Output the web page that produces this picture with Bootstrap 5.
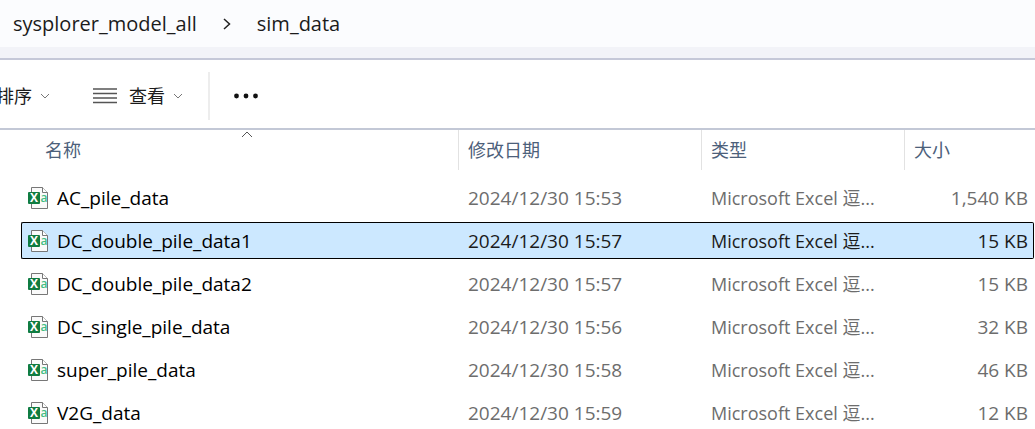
<!DOCTYPE html>
<html lang="zh-CN">
<head>
<meta charset="utf-8">
<meta name="viewport" content="width=device-width, initial-scale=1">
<title>sim_data</title>
<link href="https://cdn.jsdelivr.net/npm/bootstrap@5.3.0/dist/css/bootstrap.min.css" rel="stylesheet">
<style>
body{font:19px/24px "Open Sans","Noto Sans CJK SC",sans-serif;color:#1b1b1b;background:#fff;overflow-x:hidden}
.path-bar{height:47px;background:#fbfcfe;padding-left:13px;font-size:20px}
.path-bar a{color:#1b1b1b}
.path-sep{width:60px}
.path-gap{height:13px;background:#f2f3f8;border-bottom:2px solid #c5c8d8}
.tools{height:70px;padding-top:4px;border-bottom:2px solid #c3c8d6}
.tool{font-size:18px;line-height:24px;color:#1b1b1b;border:0;border-radius:0}
.tool-sort{margin-left:-4px}
.tool-view{margin-left:43px}
.tool-rule{width:2px;height:48px;background:#ededed;margin:0 24px 0 25px}
.files{padding:0 1px 0 21px}
.file-table{table-layout:fixed;border-collapse:separate;border-spacing:0 6px;margin:-6px 0 0}
.file-table th{height:43px;padding:0 0 3px 10px;font-size:18px;font-weight:400;color:#4c607a;background:linear-gradient(#e2e2e2,#e2e2e2) 0 0/1px 40px no-repeat}
.file-table th:first-child{padding-left:24px;background:none}
.file-table td{height:37px;padding:0 5px 0 10px;color:#6d6d6d;border:1px solid transparent;border-width:1px 0;overflow:hidden;white-space:nowrap}
.file-table td:first-child{padding-left:6px;color:#000;border-left-width:1px;border-radius:2px 0 0 2px}
.file-table td:nth-child(3){font-size:18px}
.file-table td:last-child{border-right-width:1px;border-radius:0 2px 2px 0}
.file-table .picked td{background:#cce8ff;border-color:#000;color:#1b1b1b}
.file-table .picked td:first-child{color:#000}
.col-date{width:243px}.col-type{width:203px}.col-size{width:130px}
.sort-mark{left:50%;top:1px}
.file-name{gap:9px}
</style>
</head>
<body>
<svg class="d-none" aria-hidden="true">
  <symbol id="csv" viewBox="0 0 20 22">
    <path d="M3.5.5h11l5 5v16h-16z" fill="#fafafa" stroke="#777"/>
    <path d="M14.5.5v5h5" fill="#fff" stroke="#777"/>
    <text x="12.5" y="15" font-family="Open Sans,sans-serif" font-size="12" font-weight="600" fill="#43bd83">a</text>
    <rect y="5" width="12" height="12" rx="1" fill="#107c41"/>
    <text x="6" y="15" text-anchor="middle" font-family="Open Sans,sans-serif" font-size="12" font-weight="700" fill="#fff">X</text>
  </symbol>
  <symbol id="down" viewBox="0 0 10 6"><path d="M1 1l4 4 4-4" fill="none" stroke="#777"/></symbol>
</svg>
<nav class="path-bar d-flex align-items-center" aria-label="路径">
  <a class="text-decoration-none" href="#">sysplorer_model_all</a>
  <span class="path-sep d-flex justify-content-center"><svg width="8" height="12" viewBox="0 0 8 12"><path d="M1 1l5.5 5L1 11" fill="none" stroke="#222" stroke-width="1.5"/></svg></span>
  <a class="text-decoration-none" href="#" aria-current="page">sim_data</a>
</nav>
<div class="path-gap"></div>
<div class="tools d-flex align-items-center" role="toolbar">
  <button class="tool tool-sort btn p-0 d-flex align-items-center" type="button">排序<svg class="ms-2" width="10" height="6"><use href="#down"/></svg></button>
  <button class="tool tool-view btn p-0 d-flex align-items-center" type="button"><svg width="24" height="16" viewBox="0 0 24 16"><path d="M0 1h24M0 5.5h24M0 10h24M0 14.5h24" stroke="#555" stroke-width="1.3"/></svg><span class="ms-2 ps-1">查看</span><svg class="ms-2" width="10" height="6"><use href="#down"/></svg></button>
  <span class="tool-rule"></span>
  <button class="tool btn p-0 d-flex" type="button" aria-label="更多"><svg width="24" height="6" viewBox="0 0 24 6"><g fill="#111"><circle cx="2.5" cy="3" r="2.4"/><circle cx="12" cy="3" r="2.4"/><circle cx="21.5" cy="3" r="2.4"/></g></svg></button>
</div>
<main class="files">
<table class="file-table w-100">
  <colgroup><col><col class="col-date"><col class="col-type"><col class="col-size"></colgroup>
  <thead><tr><th class="position-relative" scope="col" aria-sort="ascending">名称<svg class="sort-mark position-absolute" width="14" height="7" viewBox="0 0 14 7"><path d="M2 6l5-5 5 5" fill="none" stroke="#555"/></svg></th><th scope="col">修改日期</th><th scope="col">类型</th><th scope="col">大小</th></tr></thead>
  <tbody>
  <tr><td><div class="file-name d-flex align-items-center"><svg width="20" height="22"><use href="#csv"/></svg>AC_pile_data</div></td><td>2024/12/30 15:53</td><td>Microsoft Excel 逗...</td><td class="text-end">1,540 KB</td></tr>
  <tr class="picked" aria-selected="true"><td><div class="file-name d-flex align-items-center"><svg width="20" height="22"><use href="#csv"/></svg>DC_double_pile_data1</div></td><td>2024/12/30 15:57</td><td>Microsoft Excel 逗...</td><td class="text-end">15 KB</td></tr>
  <tr><td><div class="file-name d-flex align-items-center"><svg width="20" height="22"><use href="#csv"/></svg>DC_double_pile_data2</div></td><td>2024/12/30 15:57</td><td>Microsoft Excel 逗...</td><td class="text-end">15 KB</td></tr>
  <tr><td><div class="file-name d-flex align-items-center"><svg width="20" height="22"><use href="#csv"/></svg>DC_single_pile_data</div></td><td>2024/12/30 15:56</td><td>Microsoft Excel 逗...</td><td class="text-end">32 KB</td></tr>
  <tr><td><div class="file-name d-flex align-items-center"><svg width="20" height="22"><use href="#csv"/></svg>super_pile_data</div></td><td>2024/12/30 15:58</td><td>Microsoft Excel 逗...</td><td class="text-end">46 KB</td></tr>
  <tr><td><div class="file-name d-flex align-items-center"><svg width="20" height="22"><use href="#csv"/></svg>V2G_data</div></td><td>2024/12/30 15:59</td><td>Microsoft Excel 逗...</td><td class="text-end">12 KB</td></tr>
  </tbody>
</table>
</main>
<script src="https://cdn.jsdelivr.net/npm/bootstrap@5.3.0/dist/js/bootstrap.bundle.min.js"></script>
</body>
</html>
